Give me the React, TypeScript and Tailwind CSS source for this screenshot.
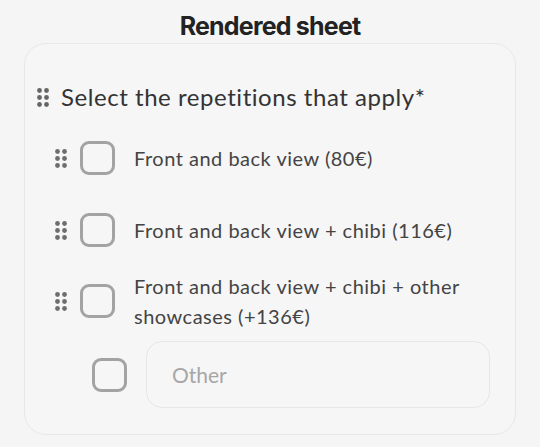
import React from "react";

function Dots({ color = "#6b6b6b" }: { color?: string }) {
  return (
    <svg width="12" height="19" viewBox="0 0 12 19" className="shrink-0">
      {[0, 1, 2].map((r) =>
        [0, 1].map((c) => (
          <circle key={`${r}-${c}`} cx={2.5 + c * 7} cy={2.5 + r * 7} r={2.4} fill={color} />
        ))
      )}
    </svg>
  );
}

function Box() {
  return <div className="w-[35px] h-[34px] shrink-0 rounded-[9px] border-[3px] border-[#a3a3a3]" />;
}

export default function App() {
  const opts = [
    { t: "Front and back view (80€)", h: "h-[72px]" },
    { t: "Front and back view + chibi (116€)", h: "h-[72px]" },
    { t: "Front and back view + chibi + other showcases (+136€)", h: "h-[70px]" },
  ];
  return (
    <div
      className="w-[540px] h-[447px] bg-[#f5f5f5] overflow-hidden"
      style={{ fontFamily: "Lato, 'Open Sans', 'Liberation Sans', sans-serif" }}
    >
      <div
        className="text-center text-[25px] font-bold text-[#222] tracking-[-0.8px] pt-[10px] leading-[33px]"
        style={{ fontFamily: "Inter, 'Liberation Sans', sans-serif" }}
      >
        Rendered sheet
      </div>
      <div className="mx-[24px] h-[392px] rounded-[22px] border border-[#e8e8e8] bg-[#f6f6f6] pl-[12px] pr-[24px] pt-[38px]">
        <div className="flex items-center gap-[12px]">
          <Dots color="#666" />
          <div className="text-[24px] text-[#333] leading-[30px] tracking-[0.55px]">
            Select the repetitions that apply*
          </div>
        </div>
        <div className="pl-[18px] mt-[10px] flex flex-col">
          {opts.map((o, i) => (
            <div key={i} className={`flex items-center ${o.h}`}>
              <Dots color="#6e6e6e" />
              <div className="ml-[13px]">
                <Box />
              </div>
              <div className="ml-[19px] text-[20px] text-[#444] leading-[30px] tracking-[0.5px] max-w-[345px]">
                {o.t}
              </div>
            </div>
          ))}
          <div className="flex items-center mt-[5px] pl-[37px]">
            <Box />
            <div className="ml-[19px] w-[344px] h-[67px] rounded-[16px] border border-[#e6e6e6] flex items-center pl-[25px] text-[21px] text-[#a6a6a6]">
              Other
            </div>
          </div>
        </div>
      </div>
    </div>
  );
}
